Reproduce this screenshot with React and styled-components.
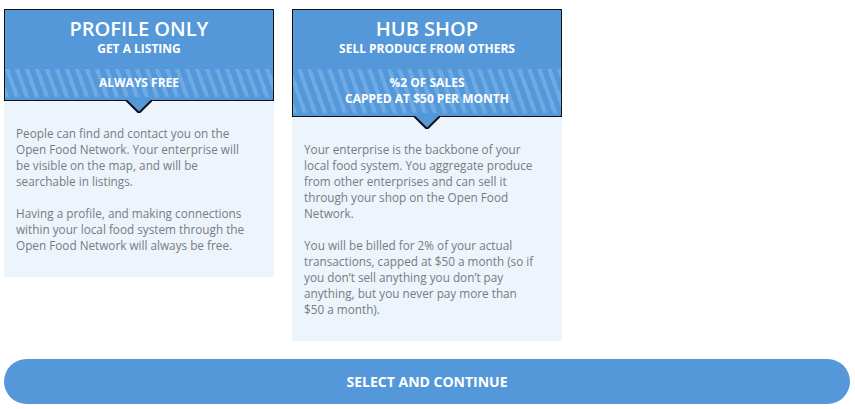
import React from "react";
import styled, { createGlobalStyle } from "styled-components";

const Global = createGlobalStyle`
  html, body { margin: 0; padding: 0; background: #fff; }
  body { font-family: "Open Sans", "Liberation Sans", sans-serif; }
`;

const Page = styled.div`
  width: 855px;
  height: 409px;
  box-sizing: border-box;
  padding: 9px 5px 0 4px;
  display: flex;
  flex-direction: column;
  gap: 18px;
`;

const Cards = styled.div`
  display: flex;
  align-items: flex-start;
  gap: 18px;
`;

const Card = styled.div`
  width: 270px;
  display: flex;
  flex-direction: column;
`;

const Header = styled.div`
  position: relative;
  background: #5498da;
  border: 1px solid #111;
  color: #fff;
  text-align: center;
  padding-bottom: 3px;
`;

const TopPart = styled.div`
  padding: 6px 8px 12px;
  display: flex;
  flex-direction: column;
`;

const Title = styled.div`
  font-size: 20px;
  line-height: 25px;
  font-weight: 600;
`;

const Subtitle = styled.div`
  font-size: 12px;
  line-height: 16px;
  font-weight: 700;
`;

const Striped = styled.div`
  padding: 6px 8px 6px;
  font-size: 12px;
  line-height: 16px;
  font-weight: 700;
  background-image: repeating-linear-gradient(
    70deg,
    #6eaae3 0px,
    #6eaae3 4px,
    #5498da 4px,
    #5498da 9.4px
  );
`;

const Arrow = styled.div`
  position: absolute;
  left: 50%;
  bottom: -13px;
  transform: translateX(-50%);
  width: 26px;
  height: 13px;
  z-index: 2;
  svg { display: block; }
`;

const Body = styled.div`
  background: #edf4fc;
  padding: 24px ${(p) => p.$padRight}px 24px 12px;
  color: #787c82;
  font-size: 11.75px;
  line-height: 16px;
  display: flex;
  flex-direction: column;
  gap: 16px;
`;

const Para = styled.p`
  margin: 0;
`;

const Button = styled.button`
  width: 846px;
  height: 45px;
  border: none;
  border-radius: 23px;
  background: #5498da;
  color: #fff;
  font-family: "Open Sans", "Liberation Sans", sans-serif;
  font-weight: 700;
  font-size: 14px;
  cursor: pointer;
`;

const ArrowShape = () => (
  <Arrow>
    <svg width="26" height="13" viewBox="0 0 26 13">
      <polygon points="0,0 26,0 13,13" fill="#5498da" />
      <polyline points="0,0 13,13 26,0" fill="none" stroke="#111" strokeWidth="2" />
    </svg>
  </Arrow>
);

const plans = [
  {
    title: "PROFILE ONLY",
    sub: "GET A LISTING",
    price: ["ALWAYS FREE"],
    padRight: 20,
    paras: [
      "People can find and contact you on the Open Food Network. Your enterprise will be visible on the map, and will be searchable in listings.",
      "Having a profile, and making connections within your local food system through the Open Food Network will always be free.",
    ],
  },
  {
    title: "HUB SHOP",
    sub: "SELL PRODUCE FROM OTHERS",
    price: ["%2 OF SALES", "CAPPED AT $50 PER MONTH"],
    padRight: 10,
    paras: [
      "Your enterprise is the backbone of your local\u00a0food system. You aggregate produce from other enterprises and can sell it through\u00a0your shop on the Open Food Network.",
      "You will be billed for 2% of your actual transactions, capped at $50 a month (so if you don\u2019t sell anything you don\u2019t pay anything, but you never pay more than $50\u00a0a\u00a0month).",
    ],
  },
];

export default function App() {
  return (
    <>
      <Global />
      <Page>
        <Cards>
          {plans.map((p) => (
            <Card key={p.title}>
              <Header>
                <TopPart>
                  <Title>{p.title}</Title>
                  <Subtitle>{p.sub}</Subtitle>
                </TopPart>
                <Striped>
                  {p.price.map((l) => (
                    <div key={l}>{l}</div>
                  ))}
                </Striped>
                <ArrowShape />
              </Header>
              <Body $padRight={p.padRight}>
                {p.paras.map((t, i) => (
                  <Para key={i}>{t}</Para>
                ))}
              </Body>
            </Card>
          ))}
        </Cards>
        <Button>SELECT AND CONTINUE</Button>
      </Page>
    </>
  );
}
